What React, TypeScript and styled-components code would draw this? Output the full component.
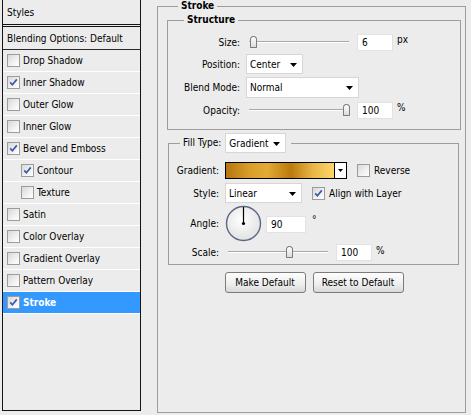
import { FC, ReactNode } from 'react'
import styled, { createGlobalStyle } from 'styled-components'

const GlobalStyle = createGlobalStyle`
  body {
    margin: 0;
    background: #ececec;
    font-family: "DejaVu Sans Condensed", "DejaVu Sans", sans-serif;
    font-size: 10px;
    color: #000;
  }
`

interface Effect {
  name: string
  checked?: boolean
  indent?: boolean
  selected?: boolean
}

const effects: Effect[] = [
  { name: 'Drop Shadow' },
  { name: 'Inner Shadow', checked: true },
  { name: 'Outer Glow' },
  { name: 'Inner Glow' },
  { name: 'Bevel and Emboss', checked: true },
  { name: 'Contour', checked: true, indent: true },
  { name: 'Texture', indent: true },
  { name: 'Satin' },
  { name: 'Color Overlay' },
  { name: 'Gradient Overlay' },
  { name: 'Pattern Overlay' },
  { name: 'Stroke', checked: true, selected: true },
]

const Checkbox: FC<{ checked?: boolean }> = ({ checked }) => (
  <CheckBox>
    {checked && (
      <svg width="11" height="11" viewBox="0 0 11 11">
        <path d="M2.2 5.4 L4.4 7.8 L8.8 2.4" fill="none" stroke="#3a5aa6" strokeWidth="1.7" />
      </svg>
    )}
  </CheckBox>
)

const Arrow: FC = () => (
  <svg width="7" height="4" viewBox="0 0 7 4">
    <polygon points="0,0 7,0 3.5,4" fill="#000" />
  </svg>
)

const Select: FC<{ width: number; height?: number; children: ReactNode }> = ({ width, height = 20, children }) => (
  <SelectBox $w={width} $h={height}>
    <span>{children}</span>
    <Arrow />
  </SelectBox>
)

const Slider: FC<{ width: number; thumb: number }> = ({ width, thumb }) => (
  <SliderBox $w={width}>
    <Track />
    <Thumb style={{ left: thumb }} />
  </SliderBox>
)

const AngleDial: FC = () => (
  <svg width="37" height="37" viewBox="0 0 37 37">
    <defs>
      <radialGradient id="dialFill" cx="45%" cy="40%" r="60%">
        <stop offset="0%" stopColor="#ffffff" />
        <stop offset="100%" stopColor="#e2e2e2" />
      </radialGradient>
    </defs>
    <circle cx="18.5" cy="18.5" r="17" fill="url(#dialFill)" stroke="#5a6682" strokeWidth="1.4" />
    <line x1="18.5" y1="18.5" x2="18.5" y2="2" stroke="#000" strokeWidth="1.2" />
    <circle cx="18.5" cy="18.5" r="1.6" fill="#000" />
  </svg>
)

export default function App() {
  return (
    <>
      <GlobalStyle />
      <Page>
        <StylesPanel>
          <PanelHeader>Styles</PanelHeader>
          <BlendRow>Blending Options: Default</BlendRow>
          {effects.map((e) => (
            <EffectRow key={e.name} $selected={e.selected} $indent={e.indent}>
              <Checkbox checked={e.checked} />
              <span>{e.name}</span>
            </EffectRow>
          ))}
        </StylesPanel>

        <StrokeGroup>
          <Legend $offset={11}>Stroke</Legend>

          <SubGroup>
            <Legend $offset={16}>Structure</Legend>
            <Row $h={22}>
              <Label $w={72}>Size:</Label>
              <Slider width={100} thumb={1} />
              <NumberField readOnly value="6" />
              <Unit>px</Unit>
            </Row>
            <Row $h={22}>
              <Label $w={72}>Position:</Label>
              <Select width={57}>Center</Select>
            </Row>
            <Row $h={24}>
              <Label $w={72}>Blend Mode:</Label>
              <Select width={113} height={21}>Normal</Select>
            </Row>
            <Row $h={22}>
              <Label $w={72}>Opacity:</Label>
              <Slider width={100} thumb={94} />
              <NumberField readOnly value="100" />
              <Unit>%</Unit>
            </Row>
          </SubGroup>

          <FillGroup>
            <Legend $offset={11} $plain>
              <span>Fill Type:</span>
              <Select width={61}>Gradient</Select>
            </Legend>
            <Row $h={22}>
              <Label $w={50}>Gradient:</Label>
              <GradientPicker>
                <GradientFill />
                <GradientArrow>
                  <svg width="5" height="3" viewBox="0 0 5 3">
                    <polygon points="0,0 5,0 2.5,3" fill="#000" />
                  </svg>
                </GradientArrow>
              </GradientPicker>
              <CheckLabel>
                <Checkbox />
                <span>Reverse</span>
              </CheckLabel>
            </Row>
            <Row $h={24}>
              <Label $w={50}>Style:</Label>
              <Select width={77}>Linear</Select>
              <CheckLabel>
                <Checkbox checked />
                <span>Align with Layer</span>
              </CheckLabel>
            </Row>
            <Row $h={37}>
              <Label $w={50}>Angle:</Label>
              <AngleDial />
              <AngleField readOnly value="90" />
              <Degree>°</Degree>
            </Row>
            <Row $h={20}>
              <Label $w={50}>Scale:</Label>
              <Slider width={100} thumb={58} />
              <NumberField readOnly value="100" />
              <Unit>%</Unit>
            </Row>
          </FillGroup>

          <ButtonRow>
            <Button $w={81}>Make Default</Button>
            <Button $w={91}>Reset to Default</Button>
          </ButtonRow>
        </StrokeGroup>
      </Page>
    </>
  )
}

const Page = styled.div`
  display: flex;
  align-items: flex-start;
  width: 471px;
  height: 415px;
`

const StylesPanel = styled.div`
  width: 139px;
  height: 411px;
  box-sizing: border-box;
  margin-left: 2px;
  border: 1px solid #141414;
  border-top: none;
  display: flex;
  flex-direction: column;
`

const PanelHeader = styled.div`
  height: 24px;
  display: flex;
  align-items: center;
  padding-left: 4px;
  border-bottom: 1px solid #141414;
`

const BlendRow = styled.div`
  height: 22px;
  margin-top: 1px;
  display: flex;
  align-items: center;
  padding-left: 4px;
  border-top: 1px solid #141414;
  border-bottom: 1px solid #2a2a2a;
`

const EffectRow = styled.div<{ $selected?: boolean; $indent?: boolean }>`
  height: 21px;
  display: flex;
  align-items: center;
  gap: 3px;
  padding-left: ${(p) => (p.$indent ? 18 : 4)}px;
  border-bottom: 1px solid #ffffff;
  background: ${(p) => (p.$selected ? '#3399ff' : 'transparent')};
  color: ${(p) => (p.$selected ? '#fff' : '#000')};
  font-weight: ${(p) => (p.$selected ? 'bold' : 'normal')};
`

const CheckBox = styled.span`
  width: 13px;
  height: 13px;
  box-sizing: border-box;
  flex-shrink: 0;
  display: flex;
  align-items: center;
  justify-content: center;
  border: 1px solid #9c9c9c;
  background: linear-gradient(135deg, #d8d8d8 0%, #f2f2f2 60%, #ffffff 100%);
`

const StrokeGroup = styled.fieldset`
  margin: 0 0 0 16px;
  padding: 2px 4px 0 9px;
  width: 309px;
  height: 413px;
  box-sizing: border-box;
  min-width: 0;
  border: 1px solid #9d9d9d;
`

const Legend = styled.legend<{ $offset: number; $plain?: boolean }>`
  margin-left: ${(p) => p.$offset}px;
  padding: 0 ${(p) => (p.$plain ? '5px' : '3px')} 0 3px;
  line-height: 12px;
  font-weight: ${(p) => (p.$plain ? 'normal' : 'bold')};
  display: flex;
  align-items: center;
  gap: 4px;
`

const SubGroup = styled.fieldset`
  margin: 0;
  padding: 5px 0 8px 0;
  min-width: 0;
  border: 1px solid #9d9d9d;
`

const FillGroup = styled(SubGroup)`
  margin: 3px 2px 0 1px;
  padding: 6px 0 2px 0;
`

const Row = styled.div<{ $h: number }>`
  height: ${(p) => p.$h}px;
  display: flex;
  align-items: center;
`

const Label = styled.span<{ $w: number }>`
  width: ${(p) => p.$w}px;
  margin-right: 6px;
  flex-shrink: 0;
  text-align: right;
`

const SelectBox = styled.div<{ $w: number; $h: number }>`
  width: ${(p) => p.$w}px;
  height: ${(p) => p.$h}px;
  box-sizing: border-box;
  display: flex;
  align-items: center;
  justify-content: space-between;
  padding: 1px 5px 0 3px;
  background: #fff;
  border: 1px solid #d6d6d6;
`

const SliderBox = styled.div<{ $w: number }>`
  position: relative;
  width: ${(p) => p.$w}px;
  height: 12px;
  margin-left: 3px;
  display: flex;
  align-items: center;
`

const Track = styled.div`
  width: 100%;
  height: 1px;
  background: #a8a8a8;
  border-bottom: 1px solid #fff;
`

const Thumb = styled.div`
  position: absolute;
  top: 0;
  width: 7px;
  height: 12px;
  box-sizing: border-box;
  border: 1px solid #7c7c7c;
  border-radius: 4px 4px 1px 1px;
  background: linear-gradient(#ffffff, #dcdcdc);
`

const NumberField = styled.input`
  width: 36px;
  height: 17px;
  box-sizing: border-box;
  margin: 0 0 0 8px;
  padding: 1px 0 0 4px;
  border: 1px solid #e2e2e2;
  background: #fff;
  font: inherit;
  outline: none;
`

const AngleField = styled(NumberField)`
  width: 40px;
  margin-left: 4px;
  margin-top: 1px;
`

const Unit = styled.span`
  margin-left: 4px;
  align-self: flex-start;
  margin-top: 3px;
`

const Degree = styled.span`
  margin-left: 6px;
  align-self: flex-start;
  margin-top: 9px;
`

const GradientPicker = styled.div`
  width: 122px;
  height: 17px;
  box-sizing: border-box;
  display: flex;
  border: 1px solid #000;
`

const GradientFill = styled.div`
  flex: 1;
  background: linear-gradient(
    to right,
    #b5760e 0%,
    #d99e2a 22%,
    #e2ab36 38%,
    #ba7a0c 60%,
    #e8b446 80%,
    #ffd669 100%
  );
`

const GradientArrow = styled.div`
  width: 11px;
  border-left: 1px solid #000;
  background: #fff;
  display: flex;
  align-items: center;
  justify-content: center;
`

const CheckLabel = styled.label`
  display: flex;
  align-items: center;
  gap: 4px;
  margin-left: 10px;
`

const ButtonRow = styled.div`
  display: flex;
  justify-content: center;
  gap: 7px;
  margin-top: 7px;
`

const Button = styled.button<{ $w: number }>`
  width: ${(p) => p.$w}px;
  height: 21px;
  padding: 0;
  border: 1px solid #7b7b7b;
  border-radius: 3px;
  background: linear-gradient(#fdfdfd 0%, #eeeeee 60%, #d8d8d8 100%);
  font: inherit;
  color: #000;
`
